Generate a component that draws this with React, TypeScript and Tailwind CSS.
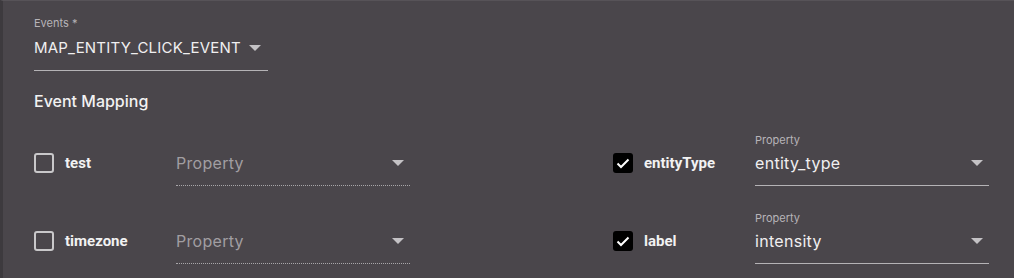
import React from "react";

const font = { fontFamily: "Inter, 'Noto Sans', sans-serif" };

const Arrow: React.FC<{ className?: string }> = (props) => (
  <svg width="12" height="6" viewBox="0 0 12 6" className={props.className}>
    <path d="M0 0 L12 0 L6 6 Z" fill="currentColor" />
  </svg>
);

interface CheckProps {
  checked: boolean;
}

const Check: React.FC<CheckProps> = (props) => {
  if (props.checked) {
    return (
      <div className="w-[20px] h-[20px] rounded-[3px] bg-black flex items-center justify-center">
        <svg width="14" height="11" viewBox="0 0 14 11">
          <path d="M1.5 5.5 L5 9 L12.5 1.5" stroke="#fff" strokeWidth="2" fill="none" />
        </svg>
      </div>
    );
  }
  return <div className="w-[20px] h-[20px] rounded-[3px] border-2 border-[#c9c8ca]" />;
};

interface RowProps {
  name: string;
  checked: boolean;
  value?: string;
}

const MappingRow: React.FC<RowProps> = (props) => {
  return (
    <div className="flex items-start h-[78px]">
      <div className="w-[142px] h-[30px] mt-[16px] flex items-center gap-[11px]">
        <Check checked={props.checked} />
        <span
          className="text-[15px] font-bold text-[#f2f2f2]"
          style={{ fontFamily: "Roboto, sans-serif" }}
        >
          {props.name}
        </span>
      </div>
      <div className="w-[234px] flex flex-col">
        <span className={"text-[11px] leading-[16px] h-[16px] text-[#b7b4b8] " + (props.value ? "" : "invisible")}>
          Property
        </span>
        <div className="flex items-center justify-between h-[30px] pr-[6px]">
          <span
            className={
              "text-[16px] tracking-[0.3px] " + (props.value ? "text-[#f0eff0]" : "text-[#a19ea2]")
            }
          >
            {props.value ?? "Property"}
          </span>
          <Arrow className="text-[#c4c2c5]" />
        </div>
        <div
          className={
            "mt-[7px] " +
            (props.value
              ? "border-b border-[#b5b3b6]"
              : "border-b border-dotted border-[#a8a6a9]")
          }
        />
      </div>
    </div>
  );
};

export default function App() {
  return (
    <div
      className="h-[278px] w-[1014px] bg-[#4a464b] border-l-[3px] border-[#3d3a3e] border-t border-t-[#575358] pl-[31px] pt-[14px]"
      style={font}
    >
      <div className="w-[234px] flex flex-col">
        <span className="text-[11px] leading-[16px] h-[18px] text-[#b7b4b8]">Events *</span>
        <div className="flex items-center h-[30px] gap-[8px]">
          <span className="text-[15px] text-[#f0eff0] tracking-[0.2px]">MAP_ENTITY_CLICK_EVENT</span>
          <Arrow className="text-[#c4c2c5]" />
        </div>
        <div className="mt-[7px] border-b border-[#b5b3b6]" />
      </div>
      <h3 className="mt-[18px] text-[16px] leading-[24px] font-medium text-[#f2f2f2]">Event Mapping</h3>
      <div className="grid grid-cols-[579px_1fr] mt-[19px]">
        <div className="flex flex-col">
          <MappingRow name="test" checked={false} />
          <MappingRow name="timezone" checked={false} />
        </div>
        <div className="flex flex-col">
          <MappingRow name="entityType" checked={true} value="entity_type" />
          <MappingRow name="label" checked={true} value="intensity" />
        </div>
      </div>
    </div>
  );
}
